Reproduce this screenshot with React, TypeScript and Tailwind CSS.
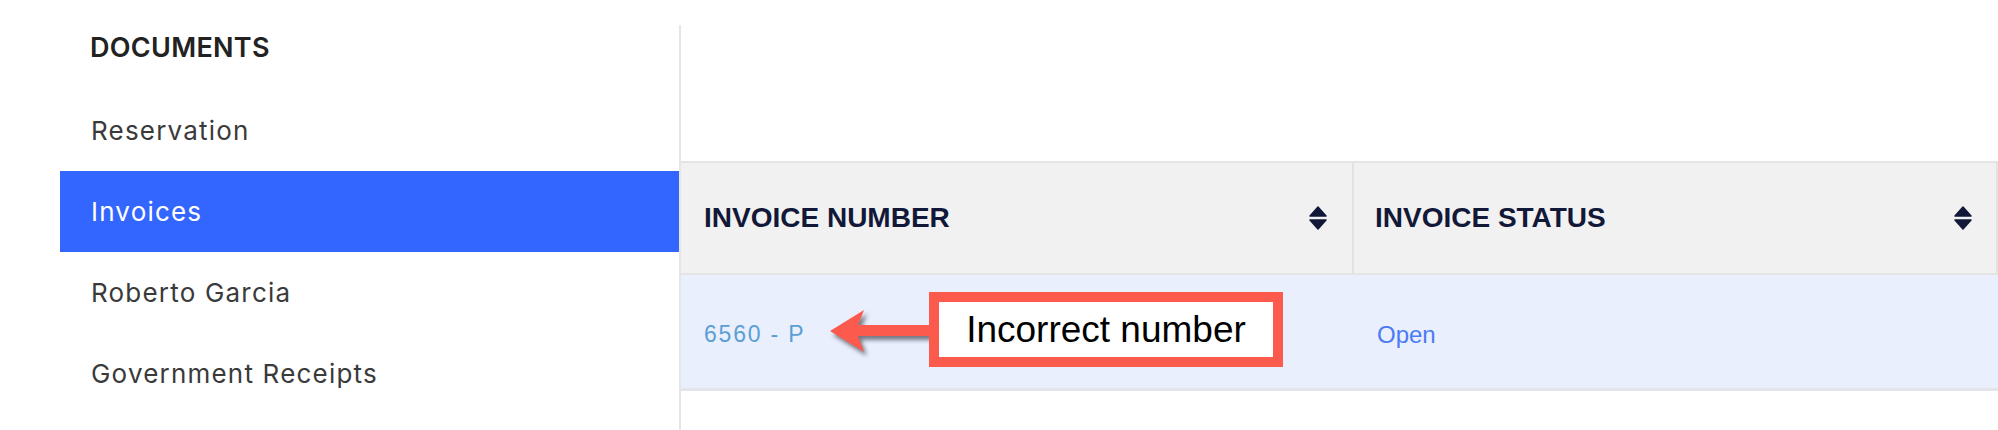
const SIDE_ITEMS = ["Reservation", "Invoices", "Roberto Garcia", "Government Receipts"];

function SortIcon() {
  return (
    <svg width="18" height="24" viewBox="0 0 18 24" className="shrink-0 text-[#111838]">
      <path d="M9 1 L17 10 H1 Z" fill="currentColor" stroke="currentColor" strokeWidth="1.5" strokeLinejoin="round" />
      <path d="M1 14 H17 L9 23 Z" fill="currentColor" stroke="currentColor" strokeWidth="1.5" strokeLinejoin="round" />
    </svg>
  );
}

function Sidebar() {
  return (
    <aside className="w-[679px] shrink-0 pl-[60px] font-['Inter',sans-serif]">
      <div className="flex h-[90px] items-center pt-[6px] pl-[30px] text-[27px] font-semibold tracking-[0.3px] text-[#222222]">
        DOCUMENTS
      </div>
      {SIDE_ITEMS.map((label) => {
        const active = label === "Invoices";
        return (
          <div
            key={label}
            className={
              active
                ? "flex h-[81px] items-center bg-[#3366ff] pl-[31px] text-[26px] tracking-[1.2px] text-white"
                : "flex h-[81px] items-center pl-[31px] text-[26px] tracking-[1.2px] text-[#3a3a3a]"
            }
          >
            {label}
          </div>
        );
      })}
    </aside>
  );
}

function Annotation() {
  return (
    <>
      <svg
        width="112"
        height="64"
        viewBox="0 0 112 64"
        className="absolute left-[142px] top-[25px] drop-shadow-[3px_4px_2px_rgba(40,40,50,0.6)]"
      >
        <polygon points="7,31 41,10 35,25 108,25 108,36 35,36 41,52" fill="#fd5a4e" />
      </svg>
      <div className="absolute left-[248px] top-[17px] flex h-[75px] w-[354px] items-center justify-center border-[10px] border-[#fd5a4e] bg-white">
        <span className="font-['Liberation_Sans',Arial,sans-serif] text-[37px] leading-none text-black">
          Incorrect number
        </span>
      </div>
    </>
  );
}

function InvoiceTable() {
  return (
    <div className="font-['Liberation_Sans',Arial,sans-serif]">
      <div className="flex h-[114px] border-y-2 border-[#e4e4e4] bg-[#f1f1f1]">
        <div className="flex w-[673px] items-center justify-between border-r-2 border-[#e2e2e2] pl-[23px] pr-[25px]">
          <span className="text-[28px] font-bold text-[#111838]">INVOICE NUMBER</span>
          <SortIcon />
        </div>
        <div className="flex flex-1 items-center justify-between border-r-2 border-[#e2e2e2] pl-[21px] pr-[24px]">
          <span className="text-[28px] font-bold text-[#111838]">INVOICE STATUS</span>
          <SortIcon />
        </div>
      </div>
      <div className="relative flex h-[116px] border-b-[3px] border-[#e3e5ea] bg-[#e9effd]">
        <div className="flex w-[675px] items-center pl-[23px] pt-[6px]">
          <span className="text-[23px] tracking-[1.8px] text-[#5b9fd4]">6560 - P</span>
        </div>
        <div className="flex flex-1 items-center pl-[21px] pt-[6px]">
          <span className="text-[24px] text-[#4a7af5]">Open</span>
        </div>
        <Annotation />
      </div>
    </div>
  );
}

export default function App() {
  return (
    <div className="flex h-[430px] w-[1998px] overflow-hidden bg-white">
      <Sidebar />
      <main className="mt-[25px] flex-1 border-l-2 border-[#e6e6e6]">
        <div className="h-[136px]" />
        <InvoiceTable />
      </main>
    </div>
  );
}
